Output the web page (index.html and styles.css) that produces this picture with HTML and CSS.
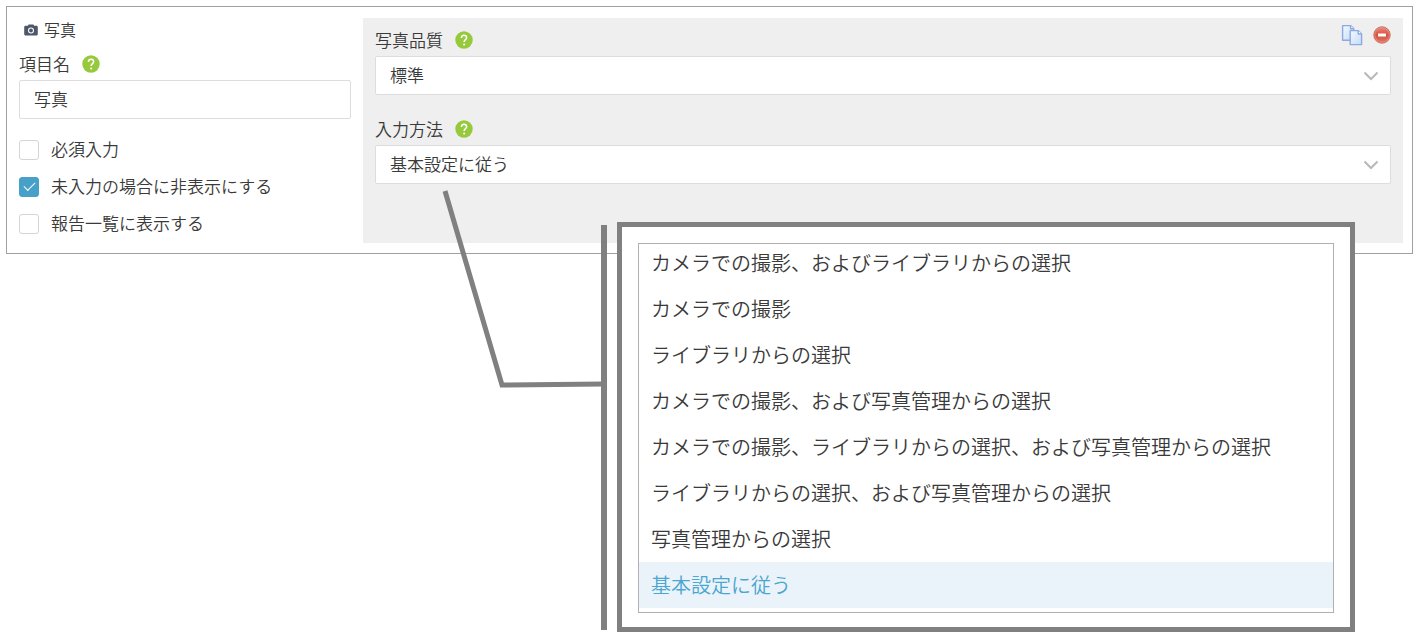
FILE: index.html
```html
<!DOCTYPE html>
<html lang="ja">
<head>
  <meta charset="utf-8">
  <title>写真</title>
  <link rel="stylesheet" href="styles.css">
</head>
<body>
  <div class="page">
    <form class="item">
      <div class="item-basic">
        <div class="item-title">
          <svg class="camera" viewBox="0 0 13 11" aria-hidden="true">
            <path d="M3.600 1.600 4.300.4h4.400l.7 1.200h2c.9 0 1.400.5 1.400 1.400v6.300c0 .9-.5 1.400-1.400 1.400H1.600C.7 10.700.2 10.200.2 9.300V3c0-.9.5-1.400 1.400-1.400z" fill="#4d566b"/>
            <circle cx="6.500" cy="6" r="2.300" fill="none" stroke="#fff" stroke-width="1"/>
          </svg>
          <span>写真</span>
        </div>
        <div class="label-row">
          <label for="item-name">項目名</label>
          <button type="button" class="help" aria-label="ヘルプ">
            <svg viewBox="0 0 18 18"><circle cx="9" cy="9" r="8.700" fill="#97c93d"/><path d="M6.400 7.100C6.400 5.300 7.500 4.300 9 4.300s2.600 1 2.600 2.400c0 2-2.500 2-2.500 4.400" fill="none" stroke="#fff" stroke-width="1.500"/><circle cx="9.100" cy="13.400" r="1" fill="#fff"/></svg>
          </button>
        </div>
        <input class="field" type="text" id="item-name" value="写真">
        <div class="checks">
          <label class="check"><input type="checkbox"><span>必須入力</span></label>
          <label class="check"><input type="checkbox" checked><span>未入力の場合に非表示にする</span></label>
          <label class="check"><input type="checkbox"><span>報告一覧に表示する</span></label>
        </div>
      </div>

      <div class="item-detail">
        <div class="detail-head">
          <div class="label-row">
            <label for="quality">写真品質</label>
            <button type="button" class="help" aria-label="ヘルプ">
              <svg viewBox="0 0 18 18"><circle cx="9" cy="9" r="8.700" fill="#97c93d"/><path d="M6.400 7.100C6.400 5.300 7.500 4.300 9 4.300s2.600 1 2.600 2.400c0 2-2.500 2-2.500 4.400" fill="none" stroke="#fff" stroke-width="1.500"/><circle cx="9.100" cy="13.400" r="1" fill="#fff"/></svg>
            </button>
          </div>
          <div class="tools">
            <button type="button" class="tool" aria-label="コピー">
              <svg width="22" height="22" viewBox="0 0 22 22">
                <defs>
                  <linearGradient id="paper" x1="0" y1="0" x2="1" y2="1">
                    <stop offset="0" stop-color="#f3f9ff"/>
                    <stop offset="1" stop-color="#c3dcf9"/>
                  </linearGradient>
                </defs>
                <g fill="url(#paper)" stroke="#8ea9df" stroke-width="1.400" stroke-linejoin="round">
                  <path d="M1.600 1.600h8l3.200 3.200v11.400H1.600z"/>
                  <path d="M9.600 1.600v3.200h3.200" fill="#fff"/>
                  <path d="M9.200 6.600h8l3.400 3.400v10.600H9.200z"/>
                  <path d="M17.200 6.600V10h3.400" fill="#fff"/>
                </g>
              </svg>
            </button>
            <button type="button" class="tool" aria-label="削除">
              <svg width="18" height="18" viewBox="0 0 18 18">
                <defs>
                  <linearGradient id="stop" x1="0" y1="0" x2="0" y2="1">
                    <stop offset="0" stop-color="#e98c7f"/>
                    <stop offset=".5" stop-color="#d9503f"/>
                    <stop offset="1" stop-color="#e07a65"/>
                  </linearGradient>
                </defs>
                <circle cx="9" cy="9" r="8.200" fill="url(#stop)" stroke="#cc6d62" stroke-width="1"/>
                <circle cx="9" cy="9" r="7.200" fill="none" stroke="#e8988c" stroke-width=".7"/>
                <rect x="5" y="7.500" width="8" height="3" rx=".5" fill="#fff"/>
              </svg>
            </button>
          </div>
        </div>
        <div class="select">
          <select class="field" id="quality">
            <option>標準</option>
          </select>
          <svg class="arrow" viewBox="0 0 16 10" aria-hidden="true"><path d="M1.500 1.500 8 8l6.500-6.500" fill="none" stroke="#b8b8b8" stroke-width="2"/></svg>
        </div>

        <div class="label-row method-label">
          <label for="method">入力方法</label>
          <button type="button" class="help" aria-label="ヘルプ">
            <svg viewBox="0 0 18 18"><circle cx="9" cy="9" r="8.700" fill="#97c93d"/><path d="M6.400 7.100C6.400 5.300 7.500 4.300 9 4.300s2.600 1 2.600 2.400c0 2-2.500 2-2.500 4.400" fill="none" stroke="#fff" stroke-width="1.500"/><circle cx="9.100" cy="13.400" r="1" fill="#fff"/></svg>
          </button>
        </div>
        <div class="select">
          <select class="field" id="method">
            <option>基本設定に従う</option>
          </select>
          <svg class="arrow" viewBox="0 0 16 10" aria-hidden="true"><path d="M1.500 1.500 8 8l6.500-6.500" fill="none" stroke="#b8b8b8" stroke-width="2"/></svg>
        </div>
      </div>
    </form>

    <!-- line from the select to the enlarged list -->
    <svg class="connector" width="164" height="200" viewBox="0 0 164 200" aria-hidden="true">
      <path d="M5 1 62 195 163 194" fill="none" stroke="#808080" stroke-width="5"/>
    </svg>

    <div class="callout">
      <div class="callout-bar"></div>
      <div class="callout-box">
        <div class="list-frame">
          <ul class="list">
            <li><button type="button">カメラでの撮影、およびライブラリからの選択</button></li>
            <li><button type="button">カメラでの撮影</button></li>
            <li><button type="button">ライブラリからの選択</button></li>
            <li><button type="button">カメラでの撮影、および写真管理からの選択</button></li>
            <li><button type="button">カメラでの撮影、ライブラリからの選択、および写真管理からの選択</button></li>
            <li><button type="button">ライブラリからの選択、および写真管理からの選択</button></li>
            <li><button type="button">写真管理からの選択</button></li>
            <li><button type="button" class="selected">基本設定に従う</button></li>
          </ul>
        </div>
      </div>
    </div>
  </div>
</body>
</html>
```

FILE: styles.css
```css
* {
  box-sizing: border-box;
}

body {
  margin: 0;
  background-color: white;
  color: #3a3a3a;
  font-family: "Noto Sans CJK JP", sans-serif;
  font-size: 17px;
  font-weight: 350;
}

button, input, select {
  font: inherit;
  color: inherit;
}

button {
  padding: 0;
  border: none;
  background: none;
  cursor: pointer;
}

/* the callout shares the item's grid cell so it lies over it */
.page {
  position: relative;
  display: grid;
  padding: 6px 11px 12px 6px;
}

.item,
.callout {
  grid-area: 1 / 1;
}

.item {
  display: grid;
  grid-template-columns: 332px 1fr;
  column-gap: 12px;
  align-self: start;
  padding: 11px 9px 10px 12px;
  border: 1px solid #a0a0a0;
}

.item-title {
  display: flex;
  align-items: center;
  gap: 6px;
  height: 24px;
  margin-bottom: 6px;
  padding-left: 5px;
  font-size: 16px;
}

.item-title span,
.check span {
  padding-bottom: 2px;
}

.camera {
  width: 14px;
  height: 12px;
}

.label-row {
  display: flex;
  align-items: center;
  gap: 12px;
  height: 32px;
}

.label-row label {
  padding-bottom: 2px;
}

.help svg {
  display: block;
  width: 18px;
  height: 18px;
}

.field {
  display: block;
  width: 100%;
  height: 39px;
  padding: 0 14px 2px;
  border: 1px solid #ddd;
  border-radius: 2px;
  background-color: white;
}

.checks {
  margin-top: 12px;
  padding-bottom: 1px;
}

.check {
  display: flex;
  align-items: center;
  gap: 12px;
  height: 37px;
}

.check input {
  display: grid;
  place-items: center;
  width: 20px;
  height: 20px;
  margin: 0;
  border: 1px solid #d5d5d5;
  border-radius: 3px;
  background-color: white;
  appearance: none;
}

.check input:checked {
  border-color: #46a0c8;
  background-color: #46a0c8;
}

.check input:checked::before {
  content: "";
  width: 10px;
  height: 5px;
  margin-bottom: 3px;
  border-left: 1px solid white;
  border-bottom: 1px solid white;
  transform: rotate(-45deg);
}

.item-detail {
  padding: 6px 12px 0;
  background-color: #efefef;
}

.detail-head {
  display: flex;
  justify-content: space-between;
  align-items: flex-start;
}

.tools {
  display: flex;
  align-items: center;
  gap: 10px;
}

.tool svg {
  display: block;
}

.method-label {
  margin-top: 18px;
}

.select {
  display: grid;
  align-items: center;
}

.select .field,
.select .arrow {
  grid-area: 1 / 1;
}

.select .field {
  appearance: none;
}

.arrow {
  justify-self: end;
  width: 16px;
  height: 10px;
  margin-right: 12px;
  pointer-events: none;
}

.connector {
  position: absolute;
  left: 440px;
  top: 190px;
}

.callout {
  display: flex;
  gap: 10px;
  margin: 216px 58px 0 595px;
}

.callout-bar {
  width: 6px;
  margin: 3px 0 2px;
  background-color: #808080;
}

.callout-box {
  flex: 1;
  padding: 16px 16px 14px;
  border: 5px solid #808080;
  background-color: white;
}

.list-frame {
  overflow: hidden;
  padding-bottom: 4px;
  border: 1px solid #b0b0b0;
}

/* list is scrolled slightly past its top edge */
.list {
  margin: -4px 0 0;
  padding: 0;
  list-style: none;
}

.list button {
  display: block;
  width: 100%;
  height: 46px;
  padding: 0 12px 2px;
  font-size: 20px;
  text-align: left;
}

.list .selected {
  background-color: #eaf3fa;
  color: #4ba6d0;
}
```
